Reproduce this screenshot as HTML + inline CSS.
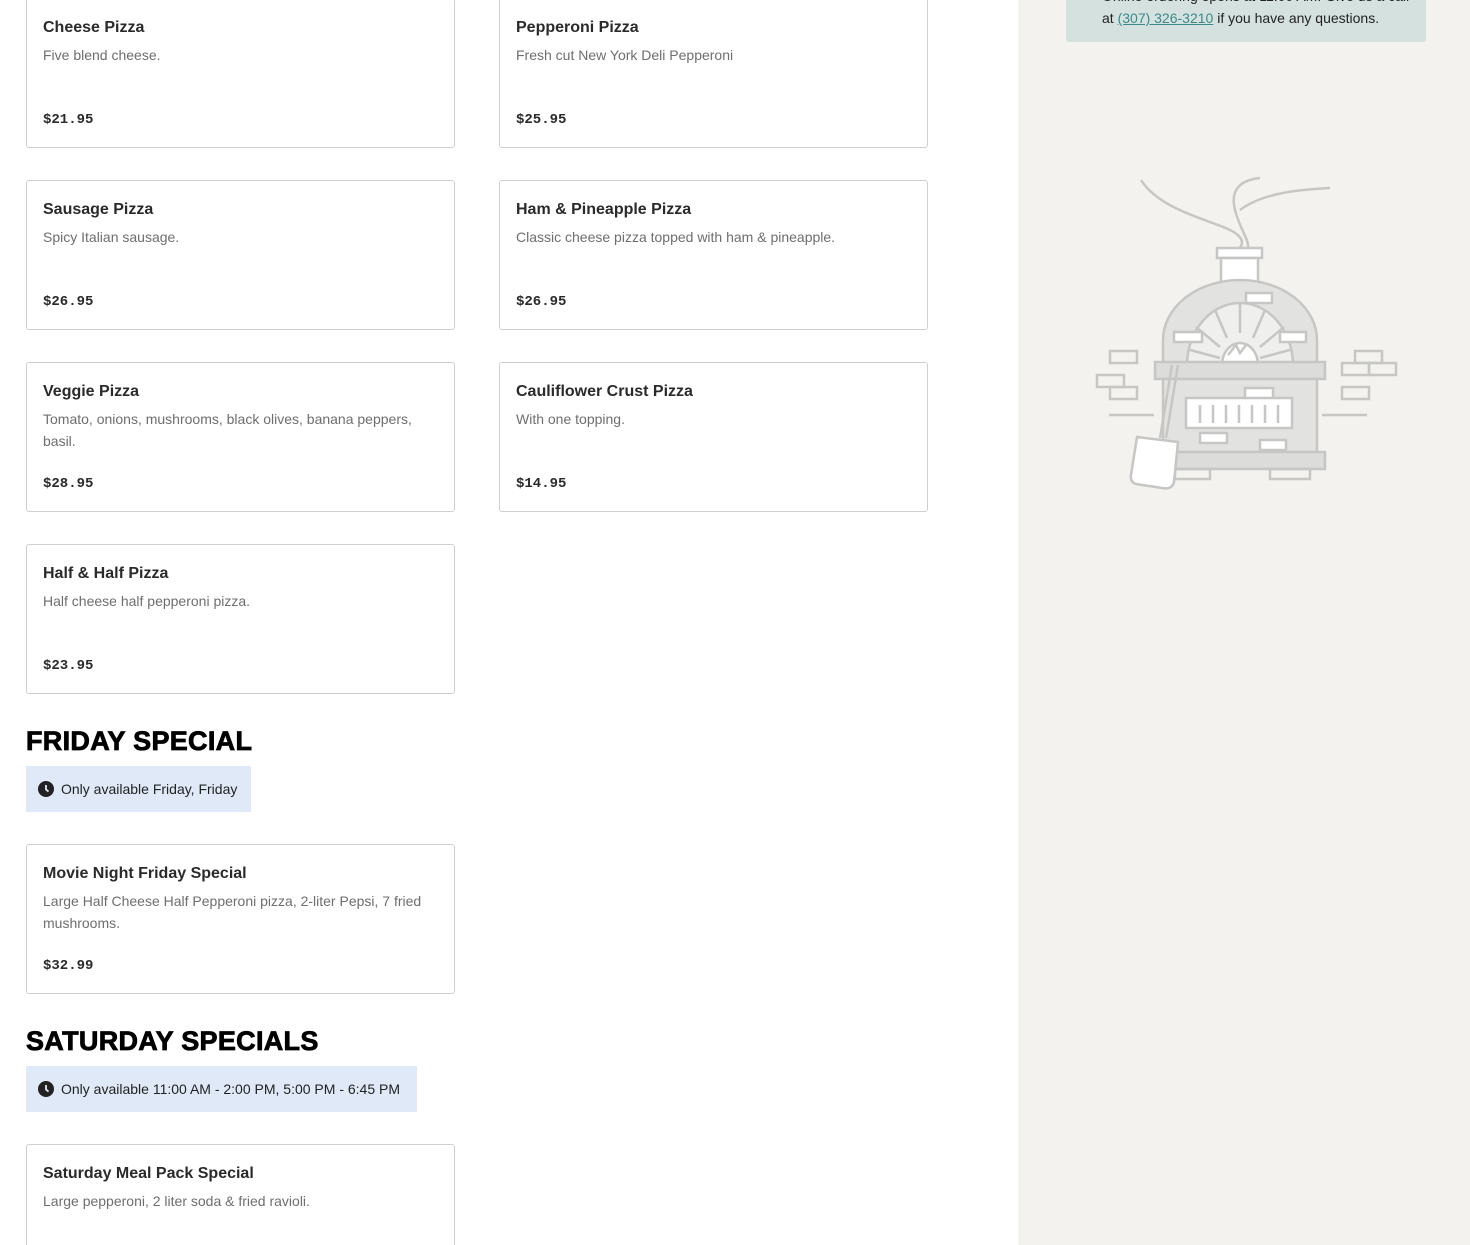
<!DOCTYPE html>
<html><head><meta charset="utf-8"><style>
*{margin:0;padding:0;box-sizing:border-box}
html,body{width:1470px;height:1245px;overflow:hidden}
body{background:#fff;font-family:"Liberation Sans",sans-serif;position:relative;color:#222}
.side{position:absolute;left:1018px;top:0;width:452px;height:1245px;background:#f3f2ef}
.info{position:absolute;left:48px;top:-20px;width:360px;height:62px;background:#d5e1df;border-radius:3px;font-size:14px;line-height:22px;padding:5px 4px 0 36px;color:#222;white-space:nowrap}
.info a{color:#3a8a8c;text-decoration:underline}
.card{position:absolute;width:429px;height:150px;border:1px solid #cfcfcf;border-radius:3px}
.card h3{position:absolute;left:16px;top:20px;font-size:16px;font-weight:bold;color:#2a2a2a;white-space:nowrap}
.card p{position:absolute;left:16px;top:45px;width:395px;font-size:14px;line-height:22px;color:#6e6e6e}
.card .pr{position:absolute;left:16px;top:113px;font-family:"Liberation Mono",monospace;font-weight:bold;font-size:14px;color:#2a2a2a}
.hd{position:absolute;left:26px;font-size:27px;font-weight:900;color:#000;letter-spacing:0.3px;-webkit-text-stroke:0.8px #000;white-space:nowrap}
.badge{position:absolute;left:26px;height:46px;background:#dfe9f7;font-size:14px;padding:15px 0 0 35px;color:#222;white-space:nowrap}
.badge svg{position:absolute;left:12px;top:15px}
</style></head><body>
<div class="card" style="left:26px;top:-2px"><h3>Cheese Pizza</h3><p>Five blend cheese.</p><div class="pr">$21.95</div></div>
<div class="card" style="left:499px;top:-2px"><h3>Pepperoni Pizza</h3><p>Fresh cut New York Deli Pepperoni</p><div class="pr">$25.95</div></div>
<div class="card" style="left:26px;top:180px"><h3>Sausage Pizza</h3><p>Spicy Italian sausage.</p><div class="pr">$26.95</div></div>
<div class="card" style="left:499px;top:180px"><h3>Ham &amp; Pineapple Pizza</h3><p>Classic cheese pizza topped with ham &amp; pineapple.</p><div class="pr">$26.95</div></div>
<div class="card" style="left:26px;top:362px"><h3>Veggie Pizza</h3><p>Tomato, onions, mushrooms, black olives, banana peppers, basil.</p><div class="pr">$28.95</div></div>
<div class="card" style="left:499px;top:362px"><h3>Cauliflower Crust Pizza</h3><p>With one topping.</p><div class="pr">$14.95</div></div>
<div class="card" style="left:26px;top:544px"><h3>Half &amp; Half Pizza</h3><p>Half cheese half pepperoni pizza.</p><div class="pr">$23.95</div></div>
<div class="hd" style="top:726px">FRIDAY SPECIAL</div>
<div class="badge" style="top:766px;width:225px"><svg width="16" height="16" viewBox="0 0 16 16"><circle cx="8" cy="8" r="8" fill="#222"/><path d="M8 4v4.5l2.5 2" stroke="#dfe9f7" stroke-width="1.8" fill="none"/></svg>Only available Friday, Friday</div>
<div class="card" style="left:26px;top:844px"><h3>Movie Night Friday Special</h3><p>Large Half Cheese Half Pepperoni pizza, 2-liter Pepsi, 7 fried mushrooms.</p><div class="pr">$32.99</div></div>
<div class="hd" style="top:1026px">SATURDAY SPECIALS</div>
<div class="badge" style="top:1066px;width:391px"><svg width="16" height="16" viewBox="0 0 16 16"><circle cx="8" cy="8" r="8" fill="#222"/><path d="M8 4v4.5l2.5 2" stroke="#dfe9f7" stroke-width="1.8" fill="none"/></svg>Only available 11:00 AM - 2:00 PM, 5:00 PM - 6:45 PM</div>
<div class="card" style="left:26px;top:1144px;height:130px"><h3>Saturday Meal Pack Special</h3><p>Large pepperoni, 2 liter soda &amp; fried ravioli.</p></div>
<div class="side">
<div class="info"><svg style="position:absolute;left:12px;top:-1px" width="16" height="16" viewBox="0 0 16 16"><circle cx="8" cy="8" r="8" fill="#222"/></svg>Online ordering opens at 11:00 AM. Give us a call<br>at <a>(307) 326-3210</a> if you have any questions.</div>
<svg style="position:absolute;left:72px;top:170px" width="320" height="330" viewBox="0 0 320 330" fill="none" stroke="#c6c6c4" stroke-width="2.5">
<path d="M51 10 C70 40 120 50 140 60 C160 70 150 80 145 80"/>
<path d="M170 8 C150 10 140 20 145 40 C150 60 160 70 158 80"/>
<path d="M150 40 C170 25 200 20 240 18"/>
<rect x="127" y="78" width="45" height="10" fill="#fff"/>
<rect x="131" y="88" width="37" height="27" fill="#fff"/>
<path d="M73 195 L73 170 A77 60 0 0 1 227 170 L227 195" fill="#e2e2e0"/>
<path d="M97 195 A53 62 0 0 1 203 195" fill="#efefed"/>
<path d="M132 195 A18 22 0 0 1 168 195" fill="#fff"/>
<path d="M150 133v30M125 140l12 28M175 140l-12 28M106 157l24 20M194 157l-24 20M100 180l30 8M200 180l-30 8"/>
<path d="M138 185l8-10 4 8 6-8" />
<rect x="156" y="123" width="26" height="10" fill="#fff"/>
<rect x="84" y="162" width="28" height="10" fill="#fff"/>
<rect x="190" y="162" width="26" height="10" fill="#fff"/>
<rect x="65" y="192" width="170" height="17" fill="#dcdcda"/>
<rect x="73" y="209" width="154" height="73" fill="#e2e2e0"/>
<rect x="155" y="218" width="28" height="12" fill="#fff"/>
<rect x="96" y="228" width="106" height="30" fill="#fff"/>
<path d="M110 235v18M123 235v18M136 235v18M149 235v18M162 235v18M175 235v18M188 235v18"/>
<rect x="110" y="263" width="27" height="10" fill="#fff"/><rect x="170" y="270" width="26" height="10" fill="#fff"/>
<rect x="65" y="282" width="170" height="17" fill="#dcdcda"/>
<rect x="85" y="299" width="35" height="10"/><rect x="180" y="299" width="40" height="10"/>
<rect x="20" y="181" width="27" height="12"/><rect x="7" y="205" width="27" height="12"/><rect x="20" y="217" width="27" height="12"/>
<rect x="265" y="181" width="27" height="12"/><rect x="252" y="193" width="27" height="12"/><rect x="279" y="193" width="27" height="12"/><rect x="252" y="217" width="27" height="12"/>
<path d="M19 245h45M232 245h45"/>
<path d="M82 195 L70 268 M88 195 L76 268"/>
<path d="M47 267 L88 272 L84 312 Q82 320 72 318 L46 314 Q40 312 41 305 Z" fill="#fff"/>
</svg>
</div>
</body></html>
